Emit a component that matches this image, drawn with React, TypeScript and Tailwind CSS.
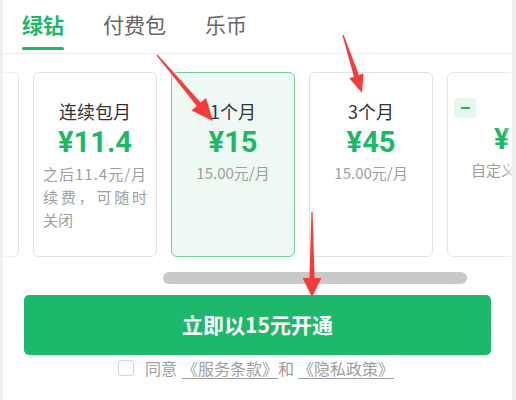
const arrow = (x1: number, y1: number, x2: number, y2: number, hl: number, hw: number) => {
  const len = Math.hypot(x2 - x1, y2 - y1)
  const ux = (x2 - x1) / len
  const uy = (y2 - y1) / len
  const px = -uy
  const py = ux
  const bx = x2 - ux * hl
  const by = y2 - uy * hl
  const pts = [
    [x1 + px * 0.6, y1 + py * 0.6],
    [bx + px * 2.6, by + py * 2.6],
    [bx + (px * hw) / 2, by + (py * hw) / 2],
    [x2, y2],
    [bx - (px * hw) / 2, by - (py * hw) / 2],
    [bx - px * 2.6, by - py * 2.6],
    [x1 - px * 0.6, y1 - py * 0.6],
  ]
  return pts.map((p) => `${p[0].toFixed(1)},${p[1].toFixed(1)}`).join(" ")
}

function Tabs() {
  return (
    <div className="flex h-[54px] items-start gap-[39px] border-b border-[#eeeeee] pl-[19px] text-[21px] leading-[30px]">
      <div className="flex flex-col pt-[9px]">
        <span className="font-bold text-[#1db868]">绿钻</span>
        <div className="mt-[8px] h-[3px] rounded-full bg-[#1db868]" />
      </div>
      <span className="pt-[9px] text-[#666666]">付费包</span>
      <span className="pt-[9px] text-[#666666]">乐币</span>
    </div>
  )
}

function Card({
  title,
  price,
  sub,
  active,
}: {
  title: string
  price: string
  sub: string
  active?: boolean
}) {
  return (
    <div
      className={
        active
          ? "flex h-[185px] w-[124px] shrink-0 flex-col items-center rounded-[6px] border-[1.5px] border-[#6dd39a] bg-[#eff9f3] pt-[26px]"
          : "flex h-[185px] w-[124px] shrink-0 flex-col items-center rounded-[6px] border border-[#e2e2e2] bg-white pt-[26px]"
      }
    >
      <div className="text-[18px] leading-[24px] text-[#333333]">{title}</div>
      <div className="mt-[2px] font-['Roboto','Noto_Sans_CJK_SC',sans-serif] text-[29px] font-bold leading-[34px] text-[#1db868]">
        {price}
      </div>
      <div className="mt-[3px] text-[15px] leading-[22px] text-[#9e9e9e]">{sub}</div>
    </div>
  )
}

export default function App() {
  return (
    <div className="relative h-[400px] w-[516px] overflow-hidden bg-[#efefef] font-['Noto_Sans_CJK_SC','Noto_Sans',sans-serif]">
      <div className="ml-[3px] flex h-full w-[509px] flex-col bg-white">
        <Tabs />

        <div className="relative mt-[18px] overflow-hidden">
          <div className="-ml-[108px] flex gap-[14px]">
            <div className="relative h-[185px] w-[124px] shrink-0 rounded-[6px] border border-[#e6e6e6] bg-white">
              <span className="absolute right-[113px] top-[90px] h-[7px] w-[1.5px] -rotate-45 bg-[#9e9e9e]" />
            </div>

            <div className="flex h-[185px] w-[124px] shrink-0 flex-col items-center rounded-[6px] border border-[#e2e2e2] bg-white pt-[26px]">
              <div className="text-[18px] leading-[24px] text-[#333333]">连续包月</div>
              <div className="mt-[2px] font-['Roboto','Noto_Sans_CJK_SC',sans-serif] text-[29px] font-bold leading-[34px] text-[#1db868]">
                ¥11.4
              </div>
              <div className="mt-[3px] w-[104px] text-[15px] leading-[23px] text-[#9e9e9e]">
                <div className="whitespace-nowrap tracking-[1px]">之后11.4元/月</div>
                <div className="flex justify-between">
                  <span>续</span>
                  <span>费</span>
                  <span>，</span>
                  <span>可</span>
                  <span>随</span>
                  <span>时</span>
                </div>
                <div>关闭</div>
              </div>
            </div>

            <Card title="1个月" price="¥15" sub="15.00元/月" active />
            <Card title="3个月" price="¥45" sub="15.00元/月" />

            <div className="flex h-[185px] w-[124px] shrink-0 flex-col rounded-[6px] border border-[#e6e6e6] bg-white pl-[6px] pt-[25px]">
              <div className="flex h-[20px] w-[22px] items-center justify-center rounded-[4px] bg-[#e6f7ee]">
                <div className="h-[2px] w-[9px] bg-[#1db868]" />
              </div>
              <div className="ml-[40px] mt-[4px] font-['Roboto','Noto_Sans_CJK_SC',sans-serif] text-[29px] font-bold leading-[34px] text-[#1db868]">
                ¥
              </div>
              <div className="ml-[17px] mt-[3px] whitespace-nowrap text-[15px] leading-[22px] text-[#9e9e9e]">
                自定义
              </div>
            </div>
          </div>
          <div className="pointer-events-none absolute inset-y-0 left-0 w-[14px] bg-gradient-to-r from-white/70 to-transparent" />
          <div className="pointer-events-none absolute inset-y-0 right-0 w-[8px] bg-gradient-to-l from-white/70 to-transparent" />
        </div>

        <div className="ml-[160px] mt-[15px] h-[12px] w-[304px] rounded-full bg-[#c9c9c9]" />

        <button className="mx-[21px] mt-[11px] flex h-[60px] items-center justify-center rounded-[5px] bg-[#1db86a] text-[21px] font-bold text-white">
          立即以15元开通
        </button>

        <div className="mt-[4px] flex items-center pl-[115px] text-[16px] leading-[18px] text-[#9e9e9e]">
          <span className="h-[16px] w-[16px] rounded-[3px] border border-[#d6d6d6]" />
          <span className="ml-[11px]">同意</span>
          <span className="ml-[5px] underline decoration-[#9e9e9e] underline-offset-[3px]">《服务条款》</span>
          <span>和</span>
          <span className="ml-[4px] underline decoration-[#9e9e9e] underline-offset-[3px]">《隐私政策》</span>
        </div>
      </div>

      <svg className="pointer-events-none absolute inset-0" width="516" height="400">
        <polygon points={arrow(157, 55, 213, 121, 22, 19)} fill="#f53b3b" />
        <polygon points={arrow(343, 35, 362, 93, 18, 15)} fill="#f53b3b" />
        <polygon points={arrow(312, 212, 312, 297, 19, 19)} fill="#f53b3b" />
      </svg>
    </div>
  )
}
